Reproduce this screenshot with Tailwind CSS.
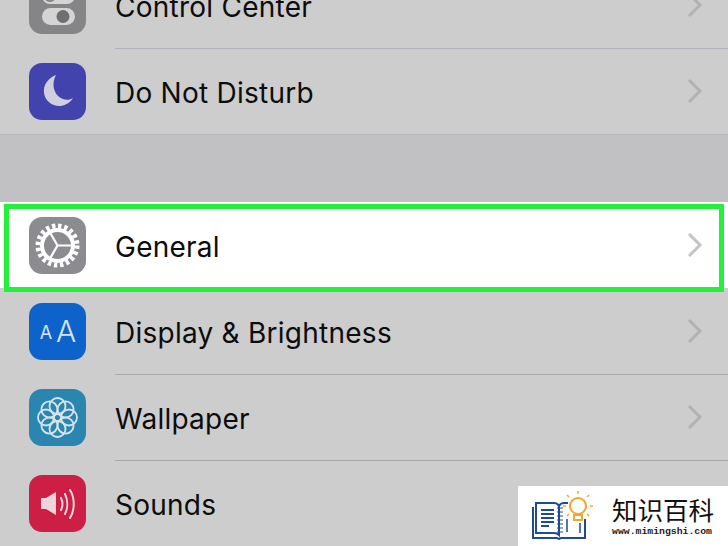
<!DOCTYPE html>
<html lang="en">
<head>
  <meta charset="UTF-8" />
  <title>Settings</title>
  <script src="https://cdn.jsdelivr.net/npm/@tailwindcss/browser@4"></script>
</head>
<body class="bg-[#cdcdcd]">
  <div class="relative w-[728px] h-[546px] overflow-hidden font-['Inter','Liberation_Sans',sans-serif] text-[#0c0c0c] text-[28px] tracking-[0.25px]">
    <div class="-mt-[38px]">
      <!-- Control Center -->
      <div class="flex items-center h-[86px] pl-[29px]">
        <div class="w-[57px] h-[57px] shrink-0 rounded-[13px] bg-[#858587]">
          <svg width="57" height="57" viewBox="0 0 57 57">
            <rect x="13" y="11" width="33" height="16" rx="8" fill="#d4d4d4"/>
            <circle cx="21" cy="19" r="6" fill="#858587"/>
            <rect x="13" y="31" width="33" height="17" rx="8.500" fill="#d4d4d4"/>
            <circle cx="34" cy="39.500" r="6.500" fill="#6f6f71"/>
          </svg>
        </div>
        <div class="flex flex-1 items-center justify-between self-start h-[87px] ml-[29px] pr-[25px] border-b border-[#b1b1c0]">
          <span class="pt-[3px]">Control Center</span>
          <svg width="16" height="26" viewBox="0 0 16 26" fill="none" stroke="#b2b2b2" stroke-width="3"><path d="M2 2l11 11-11 11"/></svg>
        </div>
      </div>
      <!-- Do Not Disturb -->
      <div class="flex items-center h-[87px] pl-[29px] border-b border-[#b9b9b9]">
        <div class="w-[57px] h-[57px] shrink-0 rounded-[13px] bg-[#4343ae]">
          <svg width="57" height="57" viewBox="0 0 57 57">
            <path d="M27 12C19 15 14 22 15 30c1 8 9 14 17 13 5-1 10-4 12-8-4 3-11 2-15-2-5-5-6-14-2-21z" fill="#cfcfe0"/>
          </svg>
        </div>
        <div class="flex flex-1 items-center justify-between h-full ml-[29px] pr-[25px]">
          <span class="pt-[4px]">Do Not Disturb</span>
          <svg width="16" height="26" viewBox="0 0 16 26" fill="none" stroke="#b2b2b2" stroke-width="3"><path d="M2 2l11 11-11 11"/></svg>
        </div>
      </div>
      <!-- section gap -->
      <div class="h-[67px] bg-[#c1c1c3]"></div>
      <!-- General -->
      <div class="flex items-center h-[86px] pl-[29px] bg-white">
        <div class="w-[57px] h-[57px] shrink-0 rounded-[13px] bg-[#8c8c90]">
          <svg width="57" height="57" viewBox="0 0 57 57" fill="none" stroke="#fff">
            <circle cx="28.500" cy="28.500" r="19.500" stroke-width="5" stroke-dasharray="3.400 2.727"/>
            <circle cx="28.500" cy="28.500" r="15.500" stroke-width="4"/>
            <path d="M28.500 28.500H43M28.500 28.500L21 15.500M28.500 28.500L21 41.500" stroke-width="2.200"/>
          </svg>
        </div>
        <div class="flex flex-1 items-center justify-between h-full ml-[29px] pr-[25px]">
          <span class="pt-[4px]">General</span>
          <svg width="16" height="26" viewBox="0 0 16 26" fill="none" stroke="#c4c4c6" stroke-width="3"><path d="M2 2l11 11-11 11"/></svg>
        </div>
      </div>
      <!-- Display & Brightness -->
      <div class="flex items-center h-[86px] pl-[29px]">
        <div class="w-[57px] h-[57px] shrink-0 rounded-[13px] bg-[#0e63cb] flex items-center justify-center gap-[4px] pl-[1px] text-[#d6e4f6] leading-none tracking-normal">
          <span class="text-[18px] mt-[3px]">A</span><span class="text-[30px] font-light">A</span>
        </div>
        <div class="flex flex-1 items-center justify-between self-start h-[87px] ml-[29px] pr-[25px] border-b border-[#a9a9a9]">
          <span class="pt-[3px]">Display &amp; Brightness</span>
          <svg width="16" height="26" viewBox="0 0 16 26" fill="none" stroke="#b2b2b2" stroke-width="3"><path d="M2 2l11 11-11 11"/></svg>
        </div>
      </div>
      <!-- Wallpaper -->
      <div class="flex items-center h-[86px] pl-[29px]">
        <div class="w-[57px] h-[57px] shrink-0 rounded-[13px] bg-[#2a86ae]">
          <svg width="57" height="57" viewBox="0 0 57 57" fill="none" stroke="#d3e4ec" stroke-width="1.800">
            <circle cx="28.500" cy="28.500" r="3.500"/>
            <circle cx="28.500" cy="17" r="8"/>
            <circle cx="28.500" cy="40" r="8"/>
            <circle cx="17" cy="28.500" r="8"/>
            <circle cx="40" cy="28.500" r="8"/>
            <circle cx="20.400" cy="20.400" r="8"/>
            <circle cx="36.600" cy="20.400" r="8"/>
            <circle cx="20.400" cy="36.600" r="8"/>
            <circle cx="36.600" cy="36.600" r="8"/>
          </svg>
        </div>
        <div class="flex flex-1 items-center justify-between self-start h-[87px] ml-[29px] pr-[25px] border-b border-[#a9a9a9]">
          <span class="pt-[3px]">Wallpaper</span>
          <svg width="16" height="26" viewBox="0 0 16 26" fill="none" stroke="#b2b2b2" stroke-width="3"><path d="M2 2l11 11-11 11"/></svg>
        </div>
      </div>
      <!-- Sounds -->
      <div class="flex items-center h-[86px] pl-[29px]">
        <div class="w-[57px] h-[57px] shrink-0 rounded-[13px] bg-[#cd1f45]">
          <svg width="57" height="57" viewBox="0 0 57 57" fill="none" stroke="#edd5da" stroke-width="2" stroke-linecap="round">
            <path d="M12 23h5l10-6v23l-10-6h-5z" fill="#edd5da" stroke="none"/>
            <path d="M32 23c2 4 2 8 0 12"/>
            <path d="M36 19c3 6 3 14 0 20"/>
            <path d="M41 15c5 8 5 20 0 28"/>
          </svg>
        </div>
        <div class="flex flex-1 items-center justify-between h-full ml-[29px] pr-[25px]">
          <span class="pt-[4px]">Sounds</span>
        </div>
      </div>
    </div>

    <!-- green highlight -->
    <div class="absolute left-[4px] top-[204px] w-[720px] h-[88px] border-[5px] border-[#22f03a]"></div>

    <!-- watermark -->
    <div class="absolute right-0 bottom-0 w-[210px] h-[60px] bg-white flex items-center pl-[14px] gap-[16px]">
      <svg width="64" height="54" viewBox="0 0 64 54" fill="none" stroke="#1f4a9a" stroke-width="2">
        <path d="M4 14h18c2 0 4 1 5 3v29c-2-2-3-2-5-2H4z"/>
        <path d="M1 18v31h24l2 1 2-1h24V30M27 17c1-2 3-3 5-3h4"/>
        <path d="M9 21h13M9 25h13M9 29h13M9 33h13M9 37h8"/>
        <path d="M25 19h6M25 23h6M25 27h6M25 31h6M25 35h6M25 39h6M25 43h6" stroke-width="1.200"/>
        <path d="M35 43V30M48 44V34" stroke-width="1.500"/>
        <circle cx="46" cy="17" r="8" stroke="#f3a72c" fill="#fff"/>
        <path d="M42 26h8v5h-8z" stroke="#f3a72c"/>
        <path d="M46 2v3M35 6l2 2M57 6l-2 2M31 17h3M58 17h3M35 27l2-2M57 27l-2-2" stroke="#f3a72c" stroke-width="1.500"/>
      </svg>
      <div class="flex flex-col tracking-normal">
        <span class="font-['Noto_Sans_CJK_SC',sans-serif] text-[25.500px] leading-[30px] text-[#111]">知识百科</span>
        <span class="font-['Liberation_Mono',monospace] text-[9.800px] leading-[12px] mt-[2px] text-[#222] font-bold">www.mimingshi.com</span>
      </div>
    </div>
  </div>
</body>
</html>
